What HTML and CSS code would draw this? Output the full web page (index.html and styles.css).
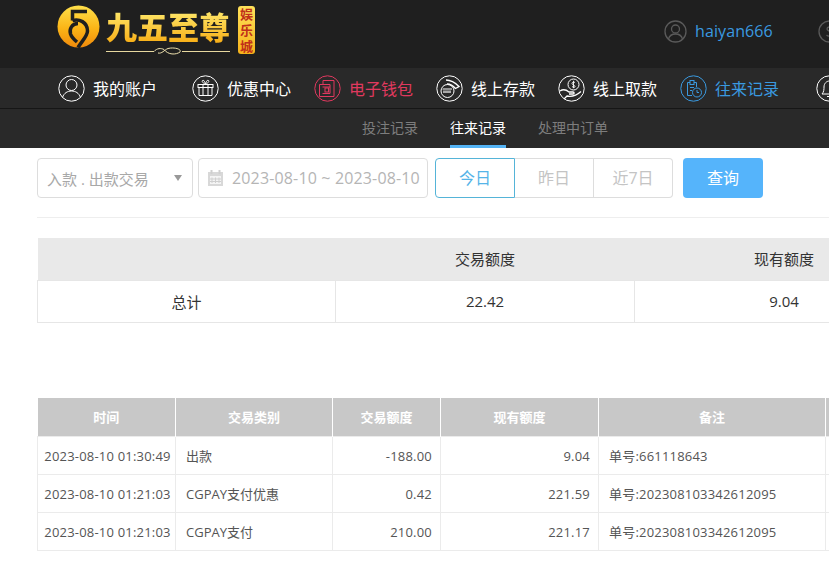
FILE: index.html
```html
<!DOCTYPE html>
<html lang="zh-CN">
<head>
    <meta charset="utf-8">
    <meta name="viewport" content="width=device-width, initial-scale=1.0">
    <title>往来记录</title>
    <link rel="stylesheet" href="styles.css">
</head>
<body>
    <div class="page">
        <header class="top">
            <div class="logo">
                <svg class="logo-mark" width="43" height="43" viewBox="0 0 43 43">
                    <defs>
                        <linearGradient id="gold" x1="0" y1="0" x2="0" y2="1">
                            <stop offset="0" stop-color="#ffe04a"/>
                            <stop offset="0.55" stop-color="#fbb416"/>
                            <stop offset="1" stop-color="#f08a0c"/>
                        </linearGradient>
                    </defs>
                    <circle cx="21.500" cy="21.500" r="21" fill="url(#gold)"/>
                    <path d="M30 6.500H15.500V15.500" fill="none" stroke="#1f1f1f" stroke-width="3.500"/>
                    <path d="M15.500 15.500C22 13.500 30.500 17 30.500 26C30.500 31 25 36 21 42.500" fill="none" stroke="#1f1f1f" stroke-width="3.500"/>
                    <path d="M21 18.500C15 18.500 12 24 13.500 29C14.500 32 17 34.500 20 37" fill="none" stroke="#1f1f1f" stroke-width="3.500"/>
                </svg>
                <div class="logo-title">
                    <span class="logo-name">九五至尊</span>
                    <svg width="124" height="9" viewBox="0 0 124 9">
                        <path d="M0 4.500H48M76 4.500H124" stroke="#e8d9a0" stroke-width="1"/>
                        <path d="M48 4.500C51 1 55 1 58 2.500C62 8 70 8 74 5C76 2 68 0 62 1.500C58 3 56 7 52 6" fill="none" stroke="#efe2ae" stroke-width="1"/>
                    </svg>
                </div>
                <span class="logo-badge">娱乐城</span>
            </div>
            <div class="user">
                <svg class="user-icon" width="23" height="23" viewBox="0 0 23 23" fill="none" stroke="#5a5a5a" stroke-width="1.300">
                    <circle cx="11.500" cy="11.500" r="10.500"/>
                    <circle cx="11.500" cy="9" r="4"/>
                    <path d="M4.500 19C5.500 15.500 8 14 11.500 14S17.500 15.500 18.500 19"/>
                </svg>
                <span class="user-name">haiyan666</span>
                <svg class="user-icon user-balance" width="23" height="23" viewBox="0 0 23 23" fill="none" stroke="#5a5a5a" stroke-width="1.300">
                    <circle cx="11.500" cy="11.500" r="10.500"/>
                    <path d="M14.500 8C13 6.500 9 6.500 9 9S14.500 11 14.500 14 10 16.500 8.500 15"/>
                </svg>
            </div>
        </header>

        <nav class="nav">
            <a class="nav-item nav-first">
                <svg width="27" height="27" viewBox="0 0 27 27" fill="none" stroke="currentColor">
                    <circle cx="13.500" cy="13.500" r="12.700"/>
                    <circle cx="13.500" cy="10" r="5.500"/>
                    <path d="M4.500 22.500C6 18 9.500 16 13.500 16S21 18 22.500 22.500"/>
                </svg>
                <span>我的账户</span>
            </a>
            <a class="nav-item">
                <svg width="27" height="27" viewBox="0 0 27 27" fill="none" stroke="currentColor">
                    <circle cx="13.500" cy="13.500" r="12.700"/>
                    <rect x="6" y="9.500" width="15" height="3"/>
                    <path d="M7 12.500V20.500H20V12.500M11 9.500V20.500M16 9.500V20.500"/>
                    <path d="M13.500 9.500C11 8 9.500 6.500 10.500 5.500S13 6.500 13.500 9.500C14 6.500 15.500 4.500 16.500 5.500S16 8 13.500 9.500Z"/>
                </svg>
                <span>优惠中心</span>
            </a>
            <a class="nav-item nav-wallet">
                <svg width="27" height="27" viewBox="0 0 27 27" fill="none" stroke="currentColor">
                    <circle cx="13.500" cy="13.500" r="12.700"/>
                    <path d="M9 5.500H20V21.500H5.500V9.500H16V18.500"/>
                    <path d="M9 5.500V9.500"/>
                    <path d="M8.500 12H16M8.500 18.500H16"/>
                    <rect x="11" y="13" width="3.500" height="4"/>
                </svg>
                <span>电子钱包</span>
            </a>
            <a class="nav-item">
                <svg width="27" height="27" viewBox="0 0 27 27" fill="none" stroke="currentColor">
                    <circle cx="13.500" cy="13.500" r="12.700"/>
                    <path d="M10 5C14 5 18 6.500 23 11.500L19.500 13.500C17 10.500 14 9 11 9" stroke-width="1.300"/>
                    <circle cx="11.500" cy="16" r="6.500"/>
                    <path d="M8 15.500V18M10 15.500V18M12 15.500V18M14 15.500V18M6.500 14H16" stroke-width="1.200"/>
                </svg>
                <span>线上存款</span>
            </a>
            <a class="nav-item">
                <svg width="27" height="27" viewBox="0 0 27 27" fill="none" stroke="currentColor">
                    <circle cx="13.500" cy="13.500" r="12.700"/>
                    <circle cx="15.500" cy="9.500" r="5.500"/>
                    <path d="M17 7.500C16 6.800 14 7 14 8.500S17 10 17 11.500 15 12.300 14 11.500M15.500 5.800V13.200" stroke-width="0.900"/>
                    <path d="M2 16C5 14 8 14.500 11 17H15C16.500 17 16.500 19 15 19H11M6 24L9 21C14 22 18 21 23 16.500" stroke-width="1.300"/>
                </svg>
                <span>线上取款</span>
            </a>
            <a class="nav-item nav-current">
                <svg width="27" height="27" viewBox="0 0 27 27" fill="none" stroke="currentColor">
                    <circle cx="13.500" cy="13.500" r="12.700"/>
                    <path d="M12 20.500H7.500V7.500H10M14 7.500H16.500V12"/>
                    <rect x="10" y="5.500" width="4" height="4"/>
                    <path d="M10 12.500H14M10 15.500H12"/>
                    <circle cx="17" cy="17.500" r="4.500"/>
                    <path d="M17 15V17.500H19"/>
                </svg>
                <span>往来记录</span>
            </a>
            <a class="nav-item">
                <svg width="27" height="27" viewBox="0 0 27 27" fill="none" stroke="currentColor">
                    <circle cx="13.500" cy="13.500" r="12.700"/>
                    <path d="M6 19C8 17 8 14 8 12C8 8.500 10.500 6 13.500 6S19 8.500 19 12C19 14 19 17 21 19Z"/>
                    <path d="M11 21.500H16"/>
                </svg>
            </a>
        </nav>

        <div class="subnav">
            <a class="subnav-item">投注记录</a>
            <a class="subnav-item subnav-active">往来记录</a>
            <a class="subnav-item">处理中订单</a>
        </div>

        <main class="content">
            <div class="filters">
                <div class="field select">
                    <span>入款 . 出款交易</span>
                    <i class="caret"></i>
                </div>
                <div class="field date">
                    <svg width="17" height="18" viewBox="0 0 17 18">
                        <path d="M1 3H16V17H1Z" fill="#d8d8d8"/>
                        <path d="M4.500 1V5M12.500 1V5" stroke="#cfcfcf" stroke-width="2"/>
                        <path d="M3 7H14V15H3Z" fill="#f4f4f4"/>
                        <path d="M5 8.500V14M8.500 8.500V14M12 8.500V14M3 10H14M3 12.500H14" stroke="#cfcfcf"/>
                    </svg>
                    <span>2023-08-10 ~ 2023-08-10</span>
                </div>
                <div class="range">
                    <a class="range-btn range-on">今日</a>
                    <a class="range-btn">昨日</a>
                    <a class="range-btn">近7日</a>
                </div>
                <a class="search-btn">查询</a>
            </div>

            <table class="summary">
                <thead>
                    <tr><th></th><th>交易额度</th><th>现有额度</th></tr>
                </thead>
                <tbody>
                    <tr><td>总计</td><td>22.42</td><td>9.04</td></tr>
                </tbody>
            </table>

            <table class="records">
                <colgroup>
                    <col class="col-time">
                    <col class="col-type">
                    <col class="col-amount">
                    <col class="col-balance">
                    <col class="col-note">
                    <col class="col-extra">
                </colgroup>
                <thead>
                    <tr><th>时间</th><th>交易类别</th><th>交易额度</th><th>现有额度</th><th>备注</th><th></th></tr>
                </thead>
                <tbody>
                    <tr>
                        <td class="digits center">2023-08-10 01:30:49</td>
                        <td>出款</td>
                        <td class="digits num">-188.00</td>
                        <td class="digits num">9.04</td>
                        <td class="digits">单号:661118643</td>
                        <td></td>
                    </tr>
                    <tr>
                        <td class="digits center">2023-08-10 01:21:03</td>
                        <td>CGPAY支付优惠</td>
                        <td class="digits num">0.42</td>
                        <td class="digits num">221.59</td>
                        <td class="digits">单号:202308103342612095</td>
                        <td></td>
                    </tr>
                    <tr>
                        <td class="digits center">2023-08-10 01:21:03</td>
                        <td>CGPAY支付</td>
                        <td class="digits num">210.00</td>
                        <td class="digits num">221.17</td>
                        <td class="digits">单号:202308103342612095</td>
                        <td></td>
                    </tr>
                </tbody>
            </table>
        </main>
    </div>
</body>
</html>
```

FILE: styles.css
```css
*{
    margin: 0;
    padding: 0;
    box-sizing: border-box;
    font-family: 'Open Sans', 'Noto Sans CJK SC', sans-serif;
}
html, body{
    height: 100%;
    overflow: hidden;
    background: #fff;
}
.page{
    width: 1200px;
}

/* top bar */
.top{
    height: 68px;
    background: #1f1f1f;
    padding-left: 57px;
    display: flex;
    align-items: flex-start;
}
.logo{
    width: 607px;
    display: flex;
    align-items: flex-start;
    padding-top: 5px;
}
.logo-mark{
    display: block;
}
.logo-title{
    display: flex;
    flex-direction: column;
    margin-left: 6px;
}
.logo-name{
    font-family: 'Noto Sans CJK SC', sans-serif;
    font-size: 31px;
    font-weight: 900;
    line-height: 41px;
    white-space: nowrap;
    background: linear-gradient(#fff27a, #f7a90f);
    -webkit-background-clip: text;
    background-clip: text;
    color: transparent;
}
.logo-title svg{
    display: block;
    margin-top: 1px;
}
.logo-badge{
    width: 17px;
    height: 48px;
    margin: 1px 0 0 8px;
    border-radius: 3px;
    background: linear-gradient(#ffe25a, #f5b21a);
    color: #c0301a;
    font-family: 'Noto Sans CJK SC', sans-serif;
    font-size: 13px;
    font-weight: 700;
    line-height: 16px;
    text-align: center;
}
.user{
    display: flex;
    align-items: center;
    height: 62px;
}
.user-name{
    margin-left: 8px;
    color: #3a9ae0;
    font-size: 16px;
    letter-spacing: .1px;
}
.user-balance{
    margin-left: 45px;
}

/* main nav */
.nav{
    height: 41px;
    background: #292929;
    border-bottom: 1px solid #161616;
    padding-left: 58px;
    display: flex;
    align-items: center;
    gap: 23px;
}
.nav-item{
    display: flex;
    align-items: center;
    gap: 8px;
    color: #fff;
    font-size: 16px;
    white-space: nowrap;
}
.nav-item svg{
    flex: none;
}
.nav-first{
    margin-right: 12px;
}
.nav-wallet{
    color: #e0395f;
}
.nav-current{
    margin-right: 14px;
    color: #3a9ae0;
}

/* sub nav */
.subnav{
    height: 39px;
    background: #292929;
    padding-left: 362px;
    display: flex;
    gap: 32px;
}
.subnav-item{
    color: #7d7d7d;
    font-size: 14px;
    line-height: 38px;
}
.subnav-active{
    height: 39px;
    color: #fff;
    border-bottom: 3px solid #55b4f5;
}

/* filters */
.content{
    padding: 10px 0 0 37px;
}
.filters{
    display: flex;
    height: 60px;
    align-items: flex-start;
    border-bottom: 1px solid #eee;
}
.field{
    height: 40px;
    border: 1px solid #ddd;
    border-radius: 4px;
    display: flex;
    align-items: center;
    color: #a8a8a8;
    white-space: nowrap;
}
.select{
    width: 156px;
    padding: 0 10px 0 9px;
    justify-content: space-between;
    font-size: 15px;
}
.caret{
    border-top: 6px solid #999;
    border-left: 4px solid transparent;
    border-right: 4px solid transparent;
}
.date{
    width: 230px;
    margin-left: 5px;
    padding-left: 8px;
    gap: 8px;
    font-size: 16px;
    letter-spacing: .15px;
    color: #b5b5b5;
}
.range{
    display: flex;
    margin-left: 7px;
}
.range-btn{
    width: 79px;
    height: 40px;
    border: 1px solid #ddd;
    border-left: 0;
    color: #c4c4c4;
    font-size: 16px;
    line-height: 38px;
    text-align: center;
}
.range-btn:last-child{
    border-radius: 0 4px 4px 0;
}
.range-on{
    width: 80px;
    border: 1px solid #55b4d8;
    border-radius: 4px 0 0 4px;
    color: #55b4e8;
}
.search-btn{
    width: 80px;
    height: 40px;
    margin-left: 10px;
    border-radius: 4px;
    background: #55b4fb;
    color: #fff;
    font-size: 16px;
    line-height: 40px;
    text-align: center;
}

/* tables */
table{
    border-collapse: collapse;
    table-layout: fixed;
}
.summary{
    width: 896px;
    margin-top: 20px;
}
.summary th, .summary td{
    width: 299px;
    text-align: center;
    font-size: 15px;
    font-weight: 400;
    color: #333;
}
.summary th:first-child, .summary td:first-child{
    width: 298px;
}
.summary th{
    height: 42px;
    background: #e9e9e9;
}
.summary td{
    height: 42px;
    border: 1px solid #e6e6e6;
}
.records{
    width: 1000px;
    margin-top: 75px;
}
.col-time{
    width: 138px;
}
.col-type{
    width: 157px;
}
.col-amount{
    width: 108px;
}
.col-balance{
    width: 158px;
}
.col-note{
    width: 227px;
}
.records th{
    height: 39px;
    background: #c8c8c8;
    border-right: 1px solid #fff;
    color: #fff;
    font-size: 13px;
    font-weight: 700;
}
.records td{
    height: 38px;
    border: 1px solid #ebebeb;
    padding: 0 8px 0 10px;
    color: #555;
    font-size: 13px;
    white-space: nowrap;
}
.records td.digits{
    letter-spacing: .2px;
}
.records td.center{
    padding: 0 0 0 2px;
    text-align: center;
}
.records td.num{
    text-align: right;
}
```
